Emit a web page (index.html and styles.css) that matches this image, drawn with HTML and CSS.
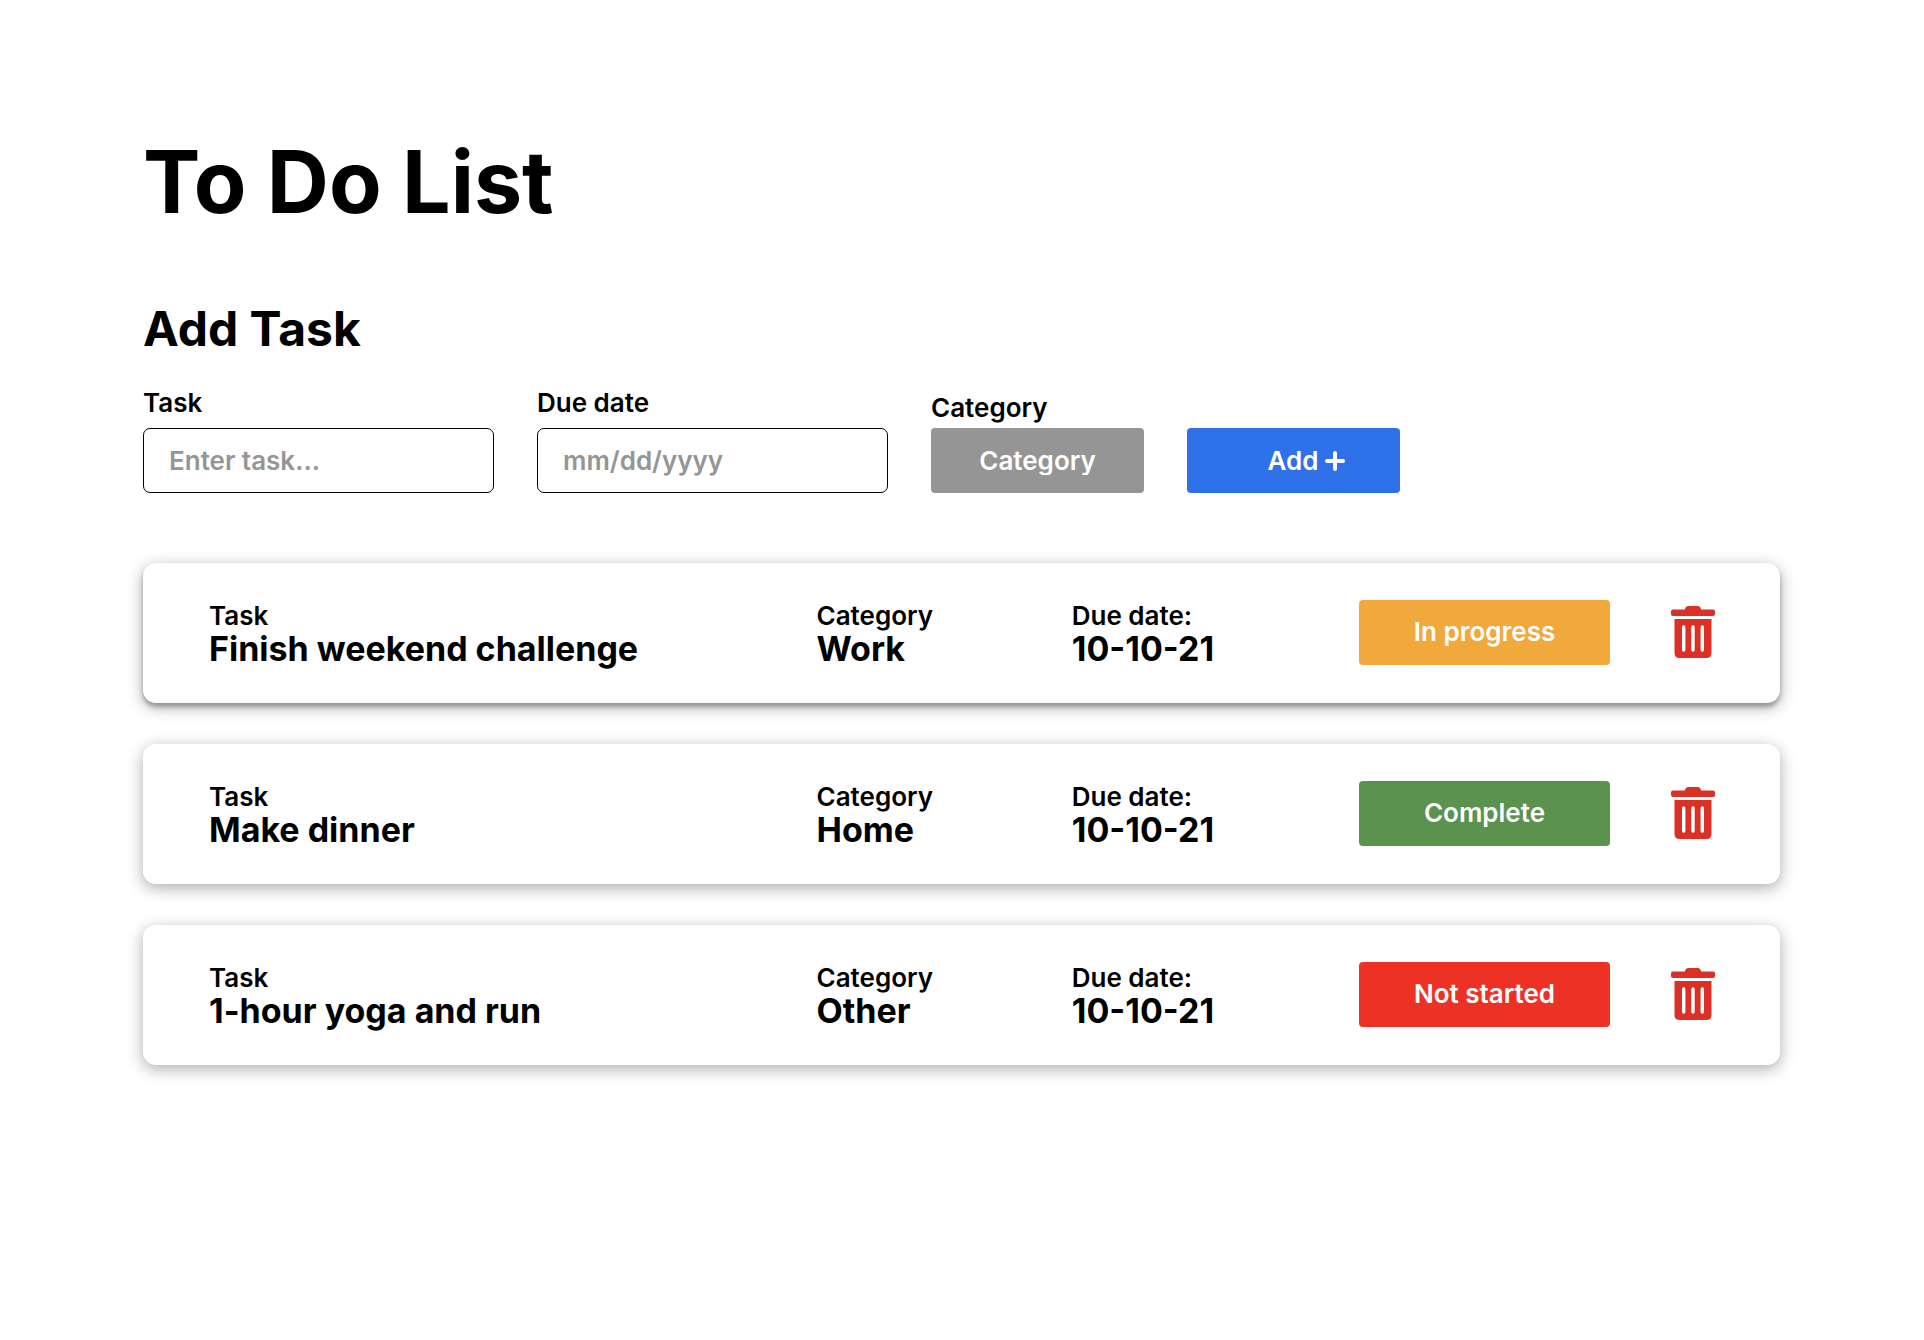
FILE: index.html
```html
<!DOCTYPE html>
<html lang="en">
<head>
  <meta charset="utf-8">
  <meta name="viewport" content="width=device-width, initial-scale=1">
  <title>To Do List</title>
  <link rel="stylesheet" href="styles.css">
</head>
<body>
  <svg class="sprite" aria-hidden="true">
    <symbol id="trash" viewBox="0 0 44 52">
      <path d="M14 3.500 C14 1.500 15.500 0 17.500 0 H26.500 C28.500 0 30 1.500 30 3.500 H42 Q44 3.500 44 5.500 V8 Q44 10 42 10 H2 Q0 10 0 8 V5.500 Q0 3.500 2 3.500 Z"/>
      <path fill-rule="evenodd" d="M3.500 13 H40.500 V47 Q40.500 52 35.500 52 H8.500 Q3.500 52 3.500 47 Z M11 21 V44 a1.700 1.700 0 0 0 3.400 0 V21 a1.700 1.700 0 0 0 -3.400 0 Z M20.300 21 V44 a1.700 1.700 0 0 0 3.400 0 V21 a1.700 1.700 0 0 0 -3.400 0 Z M29.600 21 V44 a1.700 1.700 0 0 0 3.400 0 V21 a1.700 1.700 0 0 0 -3.400 0 Z"/>
    </symbol>
  </svg>
  <main class="page">
    <h1 class="title">To Do List</h1>
    <h2 class="subtitle">Add Task</h2>
    <form class="add-form">
      <div class="field field-text">
        <label for="task">Task</label>
        <input id="task" class="text-input" type="text" placeholder="Enter task...">
      </div>
      <div class="field field-text">
        <label for="due">Due date</label>
        <input id="due" class="text-input" type="text" placeholder="mm/dd/yyyy">
      </div>
      <div class="field field-category">
        <label for="category">Category</label>
        <select id="category" class="category-select">
          <option>Category</option>
          <option>Work</option>
          <option>Home</option>
          <option>Other</option>
        </select>
      </div>
      <button class="add-button" type="button">Add
        <svg class="plus" viewBox="0 0 20 20" aria-hidden="true"><path d="M10 2V18M2 10H18"/></svg>
      </button>
    </form>

    <ul class="tasks">
      <li class="card card-active">
        <div class="item"><span class="label">Task</span><span class="value">Finish weekend challenge</span></div>
        <div class="item"><span class="label">Category</span><span class="value">Work</span></div>
        <div class="item"><span class="label">Due date:</span><span class="value">10-10-21</span></div>
        <button class="status status-progress" type="button">In progress</button>
        <button class="delete" type="button" aria-label="Delete"><svg class="trash"><use href="#trash"/></svg></button>
      </li>
      <li class="card">
        <div class="item"><span class="label">Task</span><span class="value">Make dinner</span></div>
        <div class="item"><span class="label">Category</span><span class="value">Home</span></div>
        <div class="item"><span class="label">Due date:</span><span class="value">10-10-21</span></div>
        <button class="status status-complete" type="button">Complete</button>
        <button class="delete" type="button" aria-label="Delete"><svg class="trash"><use href="#trash"/></svg></button>
      </li>
      <li class="card">
        <div class="item"><span class="label">Task</span><span class="value">1-hour yoga and run</span></div>
        <div class="item"><span class="label">Category</span><span class="value">Other</span></div>
        <div class="item"><span class="label">Due date:</span><span class="value">10-10-21</span></div>
        <button class="status status-waiting" type="button">Not started</button>
        <button class="delete" type="button" aria-label="Delete"><svg class="trash"><use href="#trash"/></svg></button>
      </li>
    </ul>
  </main>
</body>
</html>
```
FILE: styles.css
```css
* {
  box-sizing: border-box;
}

body {
  margin: 0;
  background: #fff;
  color: #000;
  font-family: "Inter", "Liberation Sans", sans-serif;
  font-size: 26px;
  font-weight: 600;
  line-height: 28px;
}

button,
input,
select {
  margin: 0;
  border: 0;
  font: inherit;
}

.sprite {
  display: none;
}

.page {
  padding: 132px 144px 64px 143px;
}

.title {
  margin: 0 0 67px;
  font-size: 86px;
  font-weight: 700;
  line-height: 100px;
}

.subtitle {
  margin: 0 0 30px;
  font-size: 48px;
  font-weight: 700;
  line-height: 60px;
}

.add-form {
  display: flex;
  flex-wrap: wrap;
  align-items: flex-end;
  gap: 43px;
}

.field {
  display: flex;
  flex-direction: column;
  gap: 11px;
}

.field-text {
  width: 351px;
}

.field-category {
  width: 213px;
  gap: 6px;
}

.text-input {
  width: 100%;
  height: 65px;
  padding: 0 25px;
  border: 1px solid #000;
  border-radius: 7px;
  background: #fff;
  color: #000;
}

.text-input::placeholder {
  color: #959595;
  opacity: 1;
}

.category-select {
  width: 100%;
  height: 65px;
  padding: 0;
  border-radius: 4px;
  appearance: none;
  background: #959595;
  color: #fff;
  text-align: center;
  text-align-last: center;
}

.add-button {
  display: flex;
  align-items: center;
  justify-content: center;
  gap: 7px;
  width: 213px;
  height: 65px;
  padding: 0 0 0 26px;
  border-radius: 4px;
  background: #2f71e9;
  color: #fff;
}

.plus {
  width: 20px;
  height: 20px;
  fill: none;
  stroke: #fff;
  stroke-width: 4;
  stroke-linecap: round;
}

.tasks {
  display: flex;
  flex-direction: column;
  gap: 41px;
  margin: 70px 0 0;
  padding: 0;
  list-style: none;
}

.card {
  display: grid;
  grid-template-columns: 607fr 255fr 287fr 251px 105px;
  align-items: center;
  min-height: 140px;
  padding: 0 65px 2px 66px;
  border-radius: 13px;
  background: #fff;
  box-shadow: 0 4px 16px rgba(0, 0, 0, 0.33);
}

.card-active {
  box-shadow: 0 4px 4px rgba(0, 0, 0, 0.25), 0 4px 16px rgba(0, 0, 0, 0.33);
}

.item {
  display: flex;
  flex-direction: column;
  padding-top: 6px;
}

.value {
  font-size: 34px;
  font-weight: 700;
  line-height: 38px;
}

.status {
  height: 65px;
  padding: 0;
  border-radius: 4px;
  color: #fff;
}

.status-progress {
  background: #f2a93c;
}

.status-complete {
  background: #5a924e;
}

.status-waiting {
  background: #ed3124;
}

.delete {
  justify-self: end;
  padding: 0;
  background: none;
  line-height: 0;
}

.trash {
  width: 44px;
  height: 52px;
  fill: #da3025;
}
```
